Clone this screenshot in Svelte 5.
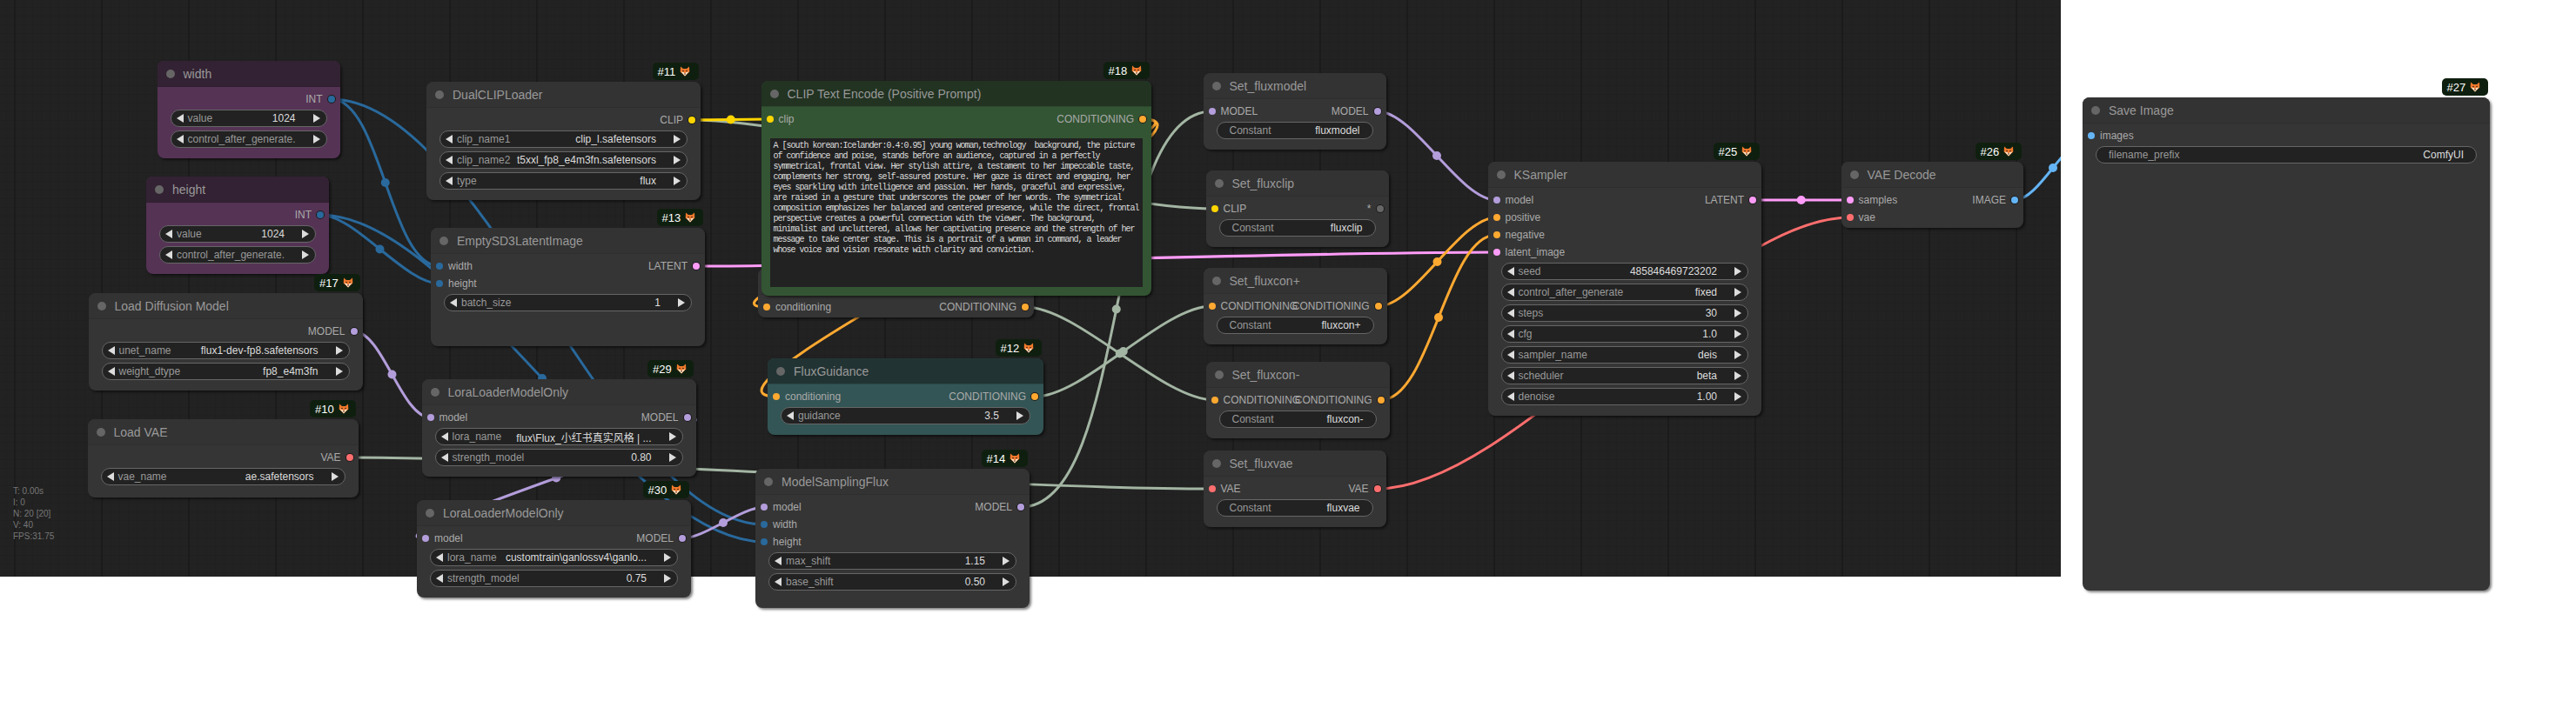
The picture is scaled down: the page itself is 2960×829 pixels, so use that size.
<script>
	const INT = '#29699c'
	const MODEL = '#b39ddb'
	const CLIP = '#ffd500'
	const VAE = '#ff6e6e'
	const COND = '#ffa931'
	const LATENT = '#ff9cf9'
	const IMAGE = '#64b5f6'
	const ANY = '#a3b5a3'

	const nodes = [
		{ id: 'width', title: 'width', x: 180.5, y: 70, w: 210, h: 112, tone: 'purple',
			rows: [[null, ['INT', INT]]],
			widgets: [['value', '1024'], ['control_after_generate.', '']] },
		{ id: 'height', title: 'height', x: 168, y: 203, w: 210, h: 112, tone: 'purple',
			rows: [[null, ['INT', INT]]],
			widgets: [['value', '1024'], ['control_after_generate.', '']] },
		{ id: 'dual', title: 'DualCLIPLoader', x: 490, y: 94, w: 315, h: 136, badge: '#11',
			rows: [[null, ['CLIP', CLIP]]],
			widgets: [['clip_name1', 'clip_l.safetensors'], ['clip_name2', 't5xxl_fp8_e4m3fn.safetensors'], ['type', 'flux']] },
		{ id: 'empty', title: 'EmptySD3LatentImage', x: 495, y: 262, w: 315, h: 136, badge: '#13',
			rows: [[['width', INT], ['LATENT', LATENT]], [['height', INT], null]],
			widgets: [['batch_size', '1']] },
		{ id: 'unet', title: 'Load Diffusion Model', x: 101.5, y: 337, w: 315, h: 112, badge: '#17',
			rows: [[null, ['MODEL', MODEL]]],
			widgets: [['unet_name', 'flux1-dev-fp8.safetensors'], ['weight_dtype', 'fp8_e4m3fn']] },
		{ id: 'vae', title: 'Load VAE', x: 100.5, y: 482, w: 311, h: 90, badge: '#10',
			rows: [[null, ['VAE', VAE]]],
			widgets: [['vae_name', 'ae.safetensors']] },
		{ id: 'lora1', title: 'LoraLoaderModelOnly', x: 484.5, y: 436, w: 315, h: 112, badge: '#29',
			rows: [[['model', MODEL], ['MODEL', MODEL]]],
			widgets: [['lora_name', 'flux\\Flux_小红书真实风格 | ...'], ['strength_model', '0.80']] },
		{ id: 'lora2', title: 'LoraLoaderModelOnly', x: 479, y: 575, w: 315, h: 112, badge: '#30',
			rows: [[['model', MODEL], ['MODEL', MODEL]]],
			widgets: [['lora_name', 'customtrain\\ganlossv4\\ganlo...'], ['strength_model', '0.75']] },
		{ id: 'zero', title: 'ConditioningZeroOut', x: 871, y: 309, w: 317, h: 56,
			rows: [[['conditioning', COND], ['CONDITIONING', COND]]], widgets: [] },
		{ id: 'guidance', title: 'FluxGuidance', x: 882, y: 412, w: 317, h: 88, tone: 'teal', badge: '#12',
			rows: [[['conditioning', COND], ['CONDITIONING', COND]]],
			widgets: [['guidance', '3.5']] },
		{ id: 'sampling', title: 'ModelSamplingFlux', x: 868, y: 539, w: 315, h: 160, badge: '#14',
			rows: [[['model', MODEL], ['MODEL', MODEL]], [['width', INT], null], [['height', INT], null]],
			widgets: [['max_shift', '1.15'], ['base_shift', '0.50']] },
		{ id: 'prompt', title: 'CLIP Text Encode (Positive Prompt)', x: 874.5, y: 93, w: 448.5, h: 247, tone: 'green', badge: '#18',
			rows: [[['clip', CLIP], ['CONDITIONING', COND]]], widgets: [], prompt: true },
		{ id: 'setmodel', title: 'Set_fluxmodel', x: 1382.5, y: 84, w: 210, h: 88,
			rows: [[['MODEL', MODEL], ['MODEL', MODEL]]],
			constant: 'fluxmodel' },
		{ id: 'setclip', title: 'Set_fluxclip', x: 1385.5, y: 196, w: 210, h: 88,
			rows: [[['CLIP', CLIP], ['*', '#666']]],
			constant: 'fluxclip' },
		{ id: 'setpos', title: 'Set_fluxcon+', x: 1382.5, y: 308, w: 211, h: 88,
			rows: [[['CONDITIONING', COND], ['CONDITIONING', COND]]],
			constant: 'fluxcon+' },
		{ id: 'setneg', title: 'Set_fluxcon-', x: 1385.5, y: 416, w: 211, h: 88,
			rows: [[['CONDITIONING', COND], ['CONDITIONING', COND]]],
			constant: 'fluxcon-' },
		{ id: 'setvae', title: 'Set_fluxvae', x: 1382.5, y: 518, w: 210, h: 88,
			rows: [[['VAE', VAE], ['VAE', VAE]]],
			constant: 'fluxvae' },
		{ id: 'sampler', title: 'KSampler', x: 1709.5, y: 186, w: 314.5, h: 292, badge: '#25',
			rows: [[['model', MODEL], ['LATENT', LATENT]], [['positive', COND], null], [['negative', COND], null], [['latent_image', LATENT], null]],
			widgets: [['seed', '485846469723202'], ['control_after_generate', 'fixed'], ['steps', '30'], ['cfg', '1.0'], ['sampler_name', 'deis'], ['scheduler', 'beta'], ['denoise', '1.00']] },
		{ id: 'decode', title: 'VAE Decode', x: 2115.5, y: 186, w: 209.5, h: 76, badge: '#26',
			rows: [[['samples', LATENT], ['IMAGE', IMAGE]], [['vae', VAE], null]], widgets: [] },
		{ id: 'save', title: 'Save Image', x: 2393, y: 112, w: 468, h: 567, badge: '#27',
			rows: [[['images', IMAGE], null]],
			text: ['filename_prefix', 'ComfyUI'] }
	]

	const byId = Object.fromEntries(nodes.map((n) => [n.id, n]))

	// from node, its output row, to node, its input row, colour
	const links = [
		['width', 0, 'empty', 0, INT],
		['width', 0, 'sampling', 1, INT],
		['height', 0, 'empty', 1, INT],
		['height', 0, 'sampling', 2, INT],
		['dual', 0, 'setclip', 0, ANY],
		['dual', 0, 'prompt', 0, CLIP],
		['empty', 0, 'sampler', 3, LATENT],
		['unet', 0, 'lora1', 0, MODEL],
		['lora1', 0, 'lora2', 0, MODEL],
		['lora2', 0, 'sampling', 0, MODEL],
		['vae', 0, 'setvae', 0, ANY],
		['sampling', 0, 'setmodel', 0, ANY],
		['prompt', 0, 'guidance', 0, COND],
		['prompt', 0, 'zero', 0, COND],
		['guidance', 0, 'setpos', 0, ANY],
		['zero', 0, 'setneg', 0, ANY],
		['setmodel', 0, 'sampler', 0, MODEL],
		['setpos', 0, 'sampler', 1, COND],
		['setneg', 0, 'sampler', 2, COND],
		['setvae', 0, 'decode', 1, VAE],
		['sampler', 0, 'decode', 0, LATENT],
		['decode', 0, 'save', 0, IMAGE]
	]

	function wire([from, fromRow, to, toRow, color]) {
		const a = byId[from]
		const b = byId[to]
		const x1 = a.x + a.w - 10
		const y1 = a.y + 44 + fromRow * 20
		const x2 = b.x + 10
		const y2 = b.y + 44 + toRow * 20
		// litegraph spline: tangents are a quarter of the distance
		const t = Math.hypot(x2 - x1, y2 - y1) * 0.25
		return {
			color,
			d: `M${x1} ${y1} C${x1 + t} ${y1} ${x2 - t} ${y2} ${x2} ${y2}`,
			mx: (x1 + x2) / 2,
			my: (y1 + y2) / 2
		}
	}

	const wires = links.map(wire)

	const promptLines = [
		'A [south korean:Icelander:0.4:0.95] young woman,technology  background, the picture',
		'of confidence and poise, stands before an audience, captured in a perfectly',
		'symmetrical, frontal view. Her stylish attire, a testament to her impeccable taste,',
		'complements her strong, self-assured posture. Her gaze is direct and engaging, her',
		'eyes sparkling with intelligence and passion. Her hands, graceful and expressive,',
		'are raised in a gesture that underscores the power of her words. The symmetrical',
		'composition emphasizes her balanced and centered presence, while the direct, frontal',
		'perspective creates a powerful connection with the viewer. The background,',
		'minimalist and uncluttered, allows her captivating presence and the strength of her',
		'message to take center stage. This is a portrait of a woman in command, a leader',
		'whose voice and vision resonate with clarity and conviction.'
	]

	const stats = ['T: 0.00s', 'I: 0', 'N: 20 [20]', 'V: 40', 'FPS:31.75']
</script>

<div class="stage">
	<div class="canvas">
		<svg class="wires" width="2368" height="664">
			{#each wires as w}
				<path d={w.d} stroke={w.color} />
				<circle cx={w.mx} cy={w.my} r="5" fill={w.color} />
			{/each}
		</svg>
		<div class="stats">
			{#each stats as line}
				<div>{line}</div>
			{/each}
		</div>
	</div>

	{#each nodes as n}
		<div class="node {n.tone ?? ''}" style="left:{n.x}px;top:{n.y}px;width:{n.w}px;height:{n.h}px">
			{#if n.badge}
				<div class="badge">
					<span>{n.badge}</span>
					<svg width="12" height="12" viewBox="0 0 12 12">
						<path d="M1 0.5 L4 3 H8 L11 0.5 L11.3 6.5 L6 11.5 L0.7 6.5Z" fill="#f0792c" />
						<path d="M1.5 6.5 L4.5 7 L6 8.5 L7.5 7 L10.5 6.5 L6 11.5Z" fill="#fbe3c8" />
						<circle cx="4" cy="5.6" r="0.8" fill="#3a2015" />
						<circle cx="8" cy="5.6" r="0.8" fill="#3a2015" />
						<circle cx="6" cy="9" r="0.8" fill="#3a2015" />
					</svg>
				</div>
			{/if}
			<div class="title">
				<i class="title-dot"></i>
				<span>{n.title}</span>
			</div>
			<div class="slots">
				{#each n.rows as [input, output]}
					<div class="row">
						<div class="slot in">
							{#if input}
								<i class="dot" style="background:{input[1]}"></i>
								<span>{input[0]}</span>
							{/if}
						</div>
						<div class="slot out">
							{#if output}
								<span>{output[0]}</span>
								<i class="dot ring" style="background:{output[1]}"></i>
							{/if}
						</div>
					</div>
				{/each}
			</div>
			{#if n.prompt}
				<div class="prompt">
					{#each promptLines as line}
						<div>{line}</div>
					{/each}
				</div>
			{/if}
			{#if n.widgets?.length}
				<div class="widgets">
					{#each n.widgets as [label, value]}
						<div class="pill">
							<i class="arrow left"></i>
							<span class="label">{label}</span>
							<span class="value">{value}</span>
							<i class="arrow right"></i>
						</div>
					{/each}
				</div>
			{/if}
			{#if n.constant}
				<div class="widgets">
					<div class="pill plain">
						<span class="label">Constant</span>
						<span class="value">{n.constant}</span>
					</div>
				</div>
			{/if}
			{#if n.text}
				<div class="widgets">
					<div class="pill plain">
						<span class="label">{n.text[0]}</span>
						<span class="value">{n.text[1]}</span>
					</div>
				</div>
			{/if}
		</div>
	{/each}
</div>

<style>
	:global(body) {
		background: #fff;
	}

	.stage {
		position: relative;
		width: 2960px;
		height: 829px;
		overflow: hidden;
		background: #fff;
		font-family: "Liberation Sans", "Noto Sans CJK SC", Arial, sans-serif;
	}

	.canvas {
		position: absolute;
		left: 0;
		top: 0;
		width: 2368px;
		height: 663px;
		overflow: hidden;
		background-color: #222;
		background-image:
			linear-gradient(90deg, transparent 16px, #1b1b1b 16px, #1b1b1b 18px, transparent 18px),
			linear-gradient(90deg, transparent 7px, #202020 7px, #202020 8px, transparent 8px),
			linear-gradient(180deg, transparent 8px, #202020 8px, #202020 9px, transparent 9px);
		background-size: 100px 100%, 10px 100%, 100% 10px;
	}

	.wires {
		position: absolute;
		left: 0;
		top: 0;
	}

	.wires path {
		fill: none;
		stroke-width: 3;
	}

	.stats {
		position: absolute;
		left: 15px;
		top: 558px;
		font-size: 10px;
		line-height: 13px;
		color: #777;
	}

	.node {
		position: absolute;
		box-sizing: border-box;
		border-radius: 8px;
		background: #353535;
		box-shadow: 2px 2px 3px rgba(0, 0, 0, 0.5);
	}

	.title {
		display: flex;
		align-items: center;
		box-sizing: border-box;
		height: 30px;
		padding-left: 10px;
		border-radius: 8px 8px 0 0;
		background: #333;
		border-bottom: 1px solid #2e2e2e;
		font-size: 14px;
		color: #999;
		white-space: nowrap;
	}

	.title-dot {
		flex: none;
		width: 10px;
		height: 10px;
		margin-right: 10px;
		border-radius: 50%;
		background: #666;
	}

	.purple { background: #553355; }
	.purple .title { background: #332233; border-bottom-color: #2e1e2e; }
	.green { background: #335533; }
	.green .title { background: #223322; border-bottom-color: #2c482c; }
	.teal { background: #335555; }
	.teal .title { background: #223333; border-bottom-color: #2c4848; }

	.slots {
		padding-top: 4px;
	}

	.row {
		display: grid;
		grid-template-columns: 1fr 1fr;
		height: 20px;
		padding: 0 6px;
	}

	.slot {
		display: flex;
		align-items: center;
		gap: 6px;
		min-width: 0;
		font-size: 12px;
		color: #aaa;
		white-space: nowrap;
	}

	.slot.out {
		justify-content: flex-end;
	}

	.dot {
		flex: none;
		width: 8px;
		height: 8px;
		border-radius: 50%;
	}

	.dot.ring {
		box-shadow: 0 0 0 1px #1c1c1c;
	}

	.prompt {
		box-sizing: border-box;
		height: 171px;
		margin: 12px 10px 0;
		padding: 3px 4px;
		background: #222;
		color: #ddd;
		font-family: "Liberation Mono", "Noto Sans CJK SC", monospace;
		font-size: 10px;
		line-height: 12px;
		letter-spacing: -1px;
		white-space: pre;
	}

	.widgets {
		display: flex;
		flex-direction: column;
		gap: 4px;
		margin: 2px 15px 0;
	}

	.pill {
		display: flex;
		align-items: center;
		box-sizing: border-box;
		height: 20px;
		padding: 0 7px 0 6px;
		border: 1px solid #666;
		border-radius: 10px;
		background: #222;
		font-size: 12px;
		white-space: nowrap;
	}

	.pill.plain {
		padding: 0 14px;
	}

	.label {
		flex: 1;
		min-width: 0;
		color: #999;
	}

	.value {
		flex: none;
		color: #ddd;
	}

	.arrow {
		flex: none;
		width: 0;
		height: 0;
		border-top: 5px solid transparent;
		border-bottom: 5px solid transparent;
	}

	.arrow.left {
		margin-right: 5px;
		border-right: 8px solid #ddd;
	}

	.arrow.right {
		margin-left: 20px;
		border-left: 8px solid #ddd;
	}

	.badge {
		position: absolute;
		right: 2.5px;
		bottom: calc(100% + 2px);
		display: flex;
		align-items: center;
		gap: 5px;
		box-sizing: border-box;
		width: 53px;
		height: 20px;
		padding-left: 6px;
		border-radius: 5px;
		background: #0f1f0f;
		color: #fff;
		font-size: 13px;
	}
</style>
